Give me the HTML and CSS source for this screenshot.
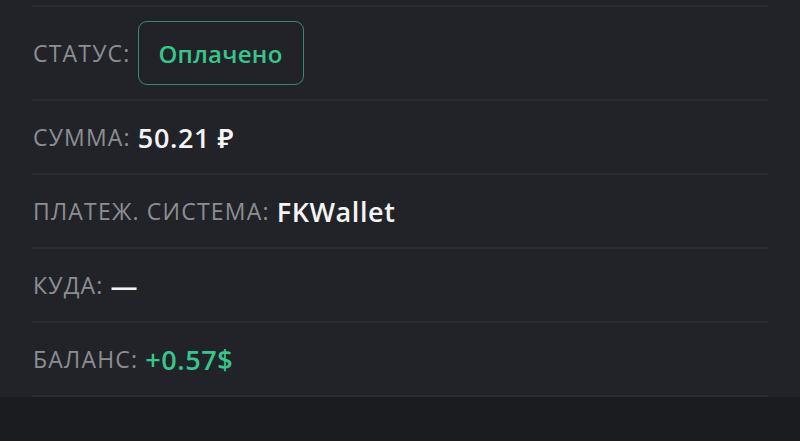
FILE: index.html
```html
<!DOCTYPE html>
<html lang="ru">
<head>
    <meta charset="UTF-8">
    <meta name="viewport" content="width=device-width, initial-scale=1.0">
    <title>Платёж</title>
    <link rel="stylesheet" href="styles.css">
</head>
<body>
    <div class="panel">
        <div class="details">
            <div class="row row-status">
                <span class="label">Статус:</span>
                <span class="badge">Оплачено</span>
            </div>
            <div class="row">
                <span class="label">Сумма:</span>
                <span class="value">50.21 ₽</span>
            </div>
            <div class="row">
                <span class="label">Платеж. система:</span>
                <span class="value">FKWallet</span>
            </div>
            <div class="row">
                <span class="label">Куда:</span>
                <span class="value">—</span>
            </div>
            <div class="row">
                <span class="label">Баланс:</span>
                <span class="value green">+0.57$</span>
            </div>
        </div>
    </div>
    <div class="footer"></div>
</body>
</html>
```
FILE: styles.css
```css
html, body {
    margin: 0;
    padding: 0;
}
body {
    background: #1b1c20;
    font-family: "Open Sans", "Noto Sans", sans-serif;
    color: #f2f2f2;
}
.panel {
    background: #222328;
    padding: 5px 32px 0 32px;
}
.details {
    border-top: 2px solid #2c2d32;
}
.row {
    display: flex;
    align-items: center;
    height: 72px;
    border-bottom: 2px solid #2c2d32;
    padding-left: 1px;
}
.row-status {
    height: 92px;
}
.label {
    text-transform: uppercase;
    color: #8d8e92;
    font-size: 23px;
    letter-spacing: 1.2px;
    margin-right: 7px;
}
.value {
    font-size: 27px;
    font-weight: 600;
    letter-spacing: 0.6px;
    color: #f4f4f4;
}
.green {
    color: #38c58c;
}
.badge {
    display: flex;
    align-items: center;
    justify-content: center;
    width: 164px;
    height: 62px;
    border: 1px solid #3b8b6b;
    border-radius: 9px;
    color: #38c58c;
    font-size: 24px;
    font-weight: 600;
    letter-spacing: 0.3px;
}
.footer {
    height: 44px;
}
```
